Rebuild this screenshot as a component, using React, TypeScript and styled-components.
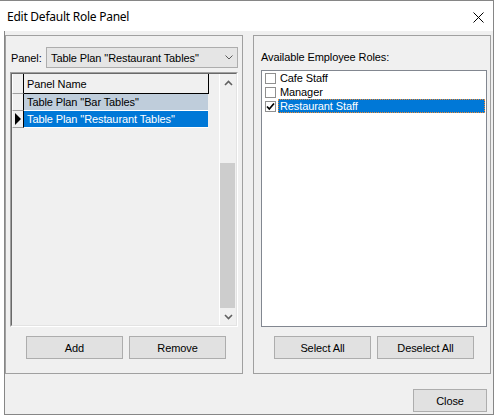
import React from "react";
import styled, { createGlobalStyle } from "styled-components";

const GlobalStyle = createGlobalStyle`
  html, body { margin: 0; padding: 0; background: #ffffff; }
  body {
    font-family: "Liberation Sans", Arial, sans-serif;
    font-size: 11px;
    color: #000;
    letter-spacing: -0.1px;
  }
  * { box-sizing: border-box; }
`;

const Window = styled.div`
  width: 494px;
  height: 415px;
  border-top: 1px solid #868686;
  border-right: 1px solid #868686;
  display: flex;
  flex-direction: column;
`;

const TitleBar = styled.div`
  height: 30px;
  flex: none;
  display: flex;
  align-items: center;
  justify-content: space-between;
  padding: 0 9px 0 7px;
  background: #fff;
`;

const Title = styled.span`
  font-family: "Noto Sans", "Segoe UI", sans-serif;
  font-size: 12px;
  line-height: 16px;
  letter-spacing: -0.25px;
  margin-top: 1px;
`;

const CloseIcon = styled.svg`
  display: block;
  margin-top: 3px;
`;

const Client = styled.div`
  flex: 1;
  margin-left: 4px;
  border-left: 1px solid #868686;
  border-bottom: 1px solid #868686;
  background: #f0f0f0;
  padding: 4px 2px 2px 0;
  display: flex;
  flex-direction: column;
`;

const GroupsRow = styled.div`
  display: flex;
  gap: 10px;
  height: 339px;
`;

const GroupBox = styled.div<{ $w: number; $pad: string }>`
  width: ${(p) => p.$w}px;
  height: 100%;
  border: 1px solid #a0a0a0;
  padding: ${(p) => p.$pad};
  display: flex;
  flex-direction: column;
`;

const TopRow = styled.div`
  display: flex;
  align-items: center;
  height: 21px;
`;

const FieldLabel = styled.span`
  width: 36px;
  padding-left: 1px;
`;

const Combo = styled.div`
  flex: 1;
  height: 21px;
  border: 1px solid #adadad;
  background: #e5e5e5;
  display: flex;
  align-items: center;
  justify-content: space-between;
  padding: 0 4px 0 4px;
`;

const Sunken = styled.div<{ $h: number }>`
  margin-top: 4px;
  height: ${(p) => p.$h}px;
  border: 1px solid;
  border-color: #a0a0a0 #ffffff #ffffff #a0a0a0;
  display: flex;
`;

const SunkenInner = styled.div`
  flex: 1;
  border: 1px solid;
  border-color: #696969 #e3e3e3 #e3e3e3 #696969;
  display: flex;
  background: #f0f0f0;
`;

const GridBody = styled.div`
  flex: 1;
  display: flex;
  flex-direction: column;
`;

const GridRow = styled.div<{ $h: number }>`
  display: flex;
  height: ${(p) => p.$h}px;
`;

const RowHeader = styled.div`
  width: 12px;
  flex: none;
  border-right: 1px solid #000;
  border-left: 1px solid #fff;
  border-bottom: 1px solid #a0a0a0;
  background: #f0f0f0;
  display: flex;
  align-items: center;
  padding-left: 2px;
`;

const Cell = styled.div<{ $kind: "header" | "selected" | "current" }>`
  width: 185px;
  flex: none;
  display: flex;
  align-items: center;
  padding-left: 3px;
  white-space: nowrap;
  background: ${(p) =>
    p.$kind === "header" ? "#f0f0f0" : p.$kind === "selected" ? "#bfcddb" : "#0078d7"};
  color: ${(p) => (p.$kind === "current" ? "#fff" : "#000")};
  border-right: 1px solid ${(p) => (p.$kind === "header" ? "#000" : "#f0f0f0")};
  border-bottom: 1px solid ${(p) => (p.$kind === "header" ? "#000" : "#ffffff")};
`;

const ScrollBar = styled.div`
  width: 17px;
  flex: none;
  display: flex;
  flex-direction: column;
  background: #f0f0f0;
  border-left: 1px solid #fff;
`;

const ArrowButton = styled.div`
  height: 17px;
  flex: none;
  display: flex;
  align-items: center;
  justify-content: center;
`;

const Track = styled.div`
  flex: 1;
  display: flex;
  flex-direction: column;
  justify-content: flex-end;
`;

const Thumb = styled.div`
  height: 145px;
  width: 15px;
  background: #cdcdcd;
`;

const ButtonRow = styled.div<{ $left: number }>`
  display: flex;
  gap: 6px;
  margin-top: 9px;
  padding-left: ${(p) => p.$left}px;
`;

const Button = styled.div<{ $w: number }>`
  width: ${(p) => p.$w}px;
  height: 23px;
  border: 1px solid #adadad;
  background: #e1e1e1;
  display: flex;
  align-items: center;
  justify-content: center;
  padding-top: 1px;
`;

const GroupLabel = styled.div`
  line-height: 13px;
  height: 13px;
`;

const ListBox = styled.div`
  margin-top: 6px;
  height: 257px;
  border: 1px solid #828790;
  background: #fff;
  display: flex;
  flex-direction: column;
`;

const ListItem = styled.div`
  height: 14px;
  display: flex;
  align-items: center;
`;

const CheckBox = styled.div`
  width: 11px;
  height: 11px;
  margin-left: 3px;
  border: 1px solid #8f8f8f;
  background: #fff;
  flex: none;
  display: flex;
  align-items: center;
  justify-content: center;
`;

const ItemText = styled.span<{ $selected?: boolean }>`
  flex: 1;
  height: 100%;
  margin: 0 1px 0 2px;
  padding-left: 2px;
  display: flex;
  align-items: center;
  white-space: nowrap;
  background: ${(p) => (p.$selected ? "#0078d7" : "transparent")};
  color: ${(p) => (p.$selected ? "#fff" : "#000")};
  outline: ${(p) => (p.$selected ? "1px dotted #f08a30" : "none")};
  outline-offset: -1px;
`;

const BottomBar = styled.div`
  display: flex;
  justify-content: flex-end;
  margin-top: 15px;
  padding-right: 4px;
`;

const Up = () => (
  <svg width="9" height="6" viewBox="0 0 9 6">
    <polyline points="1,5 4.5,1.5 8,5" fill="none" stroke="#606060" strokeWidth="1.6" />
  </svg>
);
const Down = () => (
  <svg width="9" height="6" viewBox="0 0 9 6">
    <polyline points="1,1 4.5,4.5 8,1" fill="none" stroke="#606060" strokeWidth="1.6" />
  </svg>
);

const roles = [
  { name: "Cafe Staff", checked: false },
  { name: "Manager", checked: false },
  { name: "Restaurant Staff", checked: true, selected: true },
];

export default function App() {
  return (
    <>
      <GlobalStyle />
      <Window>
        <TitleBar>
          <Title>Edit Default Role Panel</Title>
          <CloseIcon width="11" height="11" viewBox="0 0 11 11">
            <path d="M0.5 0.5 L10.5 10.5 M10.5 0.5 L0.5 10.5" stroke="#000" strokeWidth="1" />
          </CloseIcon>
        </TitleBar>
        <Client>
          <GroupsRow>
            <GroupBox $w={238} $pad="11px 4px 0 4px">
              <TopRow>
                <FieldLabel>Panel:</FieldLabel>
                <Combo>
                  <span>Table Plan "Restaurant Tables"</span>
                  <svg width="8" height="5" viewBox="0 0 8 5">
                    <polyline points="0.5,0.5 4,4 7.5,0.5" fill="none" stroke="#5a5a5a" strokeWidth="1" />
                  </svg>
                </Combo>
              </TopRow>
              <Sunken $h={255}>
                <SunkenInner>
                  <GridBody>
                    <GridRow $h={20}>
                      <RowHeader />
                      <Cell $kind="header">Panel Name</Cell>
                    </GridRow>
                    <GridRow $h={17}>
                      <RowHeader />
                      <Cell $kind="selected">Table Plan "Bar Tables"</Cell>
                    </GridRow>
                    <GridRow $h={17}>
                      <RowHeader>
                        <svg width="6" height="12" viewBox="0 0 6 12">
                          <polygon points="0,0 6,6 0,12" fill="#000" />
                        </svg>
                      </RowHeader>
                      <Cell $kind="current">Table Plan "Restaurant Tables"</Cell>
                    </GridRow>
                  </GridBody>
                  <ScrollBar>
                    <ArrowButton>
                      <Up />
                    </ArrowButton>
                    <Track>
                      <Thumb />
                    </Track>
                    <ArrowButton>
                      <Down />
                    </ArrowButton>
                  </ScrollBar>
                </SunkenInner>
              </Sunken>
              <ButtonRow $left={16}>
                <Button $w={97}>Add</Button>
                <Button $w={97}>Remove</Button>
              </ButtonRow>
            </GroupBox>
            <GroupBox $w={238} $pad="15px 3px 0 7px">
              <GroupLabel>Available Employee Roles:</GroupLabel>
              <ListBox>
                {roles.map((r) => (
                  <ListItem key={r.name}>
                    <CheckBox>
                      {r.checked && (
                        <svg width="9" height="9" viewBox="0 0 9 9">
                          <polyline points="1,4.5 3.3,7 8,1.5" fill="none" stroke="#000" strokeWidth="1.7" />
                        </svg>
                      )}
                    </CheckBox>
                    <ItemText $selected={r.selected}>{r.name}</ItemText>
                  </ListItem>
                ))}
              </ListBox>
              <ButtonRow $left={13}>
                <Button $w={97}>Select All</Button>
                <Button $w={97}>Deselect All</Button>
              </ButtonRow>
            </GroupBox>
          </GroupsRow>
          <BottomBar>
            <Button $w={74}>Close</Button>
          </BottomBar>
        </Client>
      </Window>
    </>
  );
}
